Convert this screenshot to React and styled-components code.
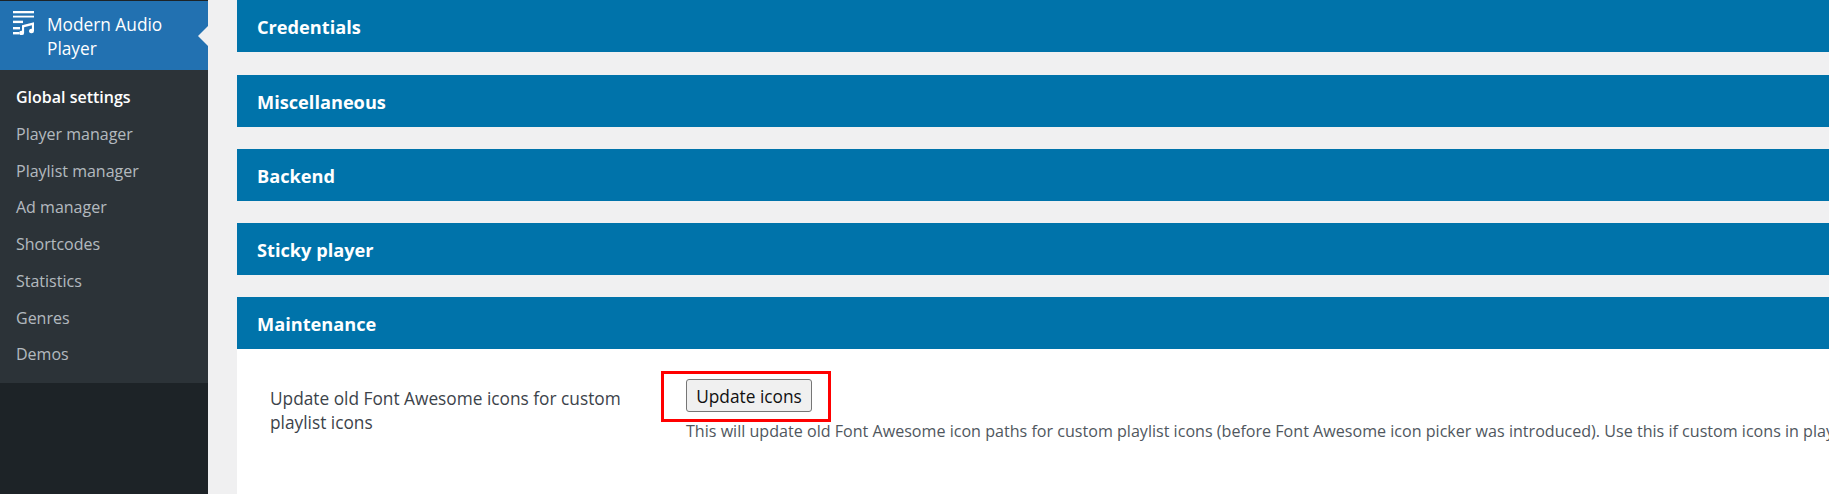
import React from 'react';
import styled, { createGlobalStyle } from 'styled-components';

const GlobalStyle = createGlobalStyle`
  html, body {
    margin: 0;
    height: 100%;
    overflow: hidden;
    background: #f0f0f1;
  }
  #root {
    height: 100%;
  }
`;

const menuItems = [
  'Global settings',
  'Player manager',
  'Playlist manager',
  'Ad manager',
  'Shortcodes',
  'Statistics',
  'Genres',
  'Demos',
];

const sections = ['Credentials', 'Miscellaneous', 'Backend', 'Sticky player'];

const Layout = styled.div`
  display: flex;
  height: 494px;
  width: 1829px;
  overflow: hidden;
  font-family: 'Open Sans', 'Liberation Sans', sans-serif;
`;

const Sidebar = styled.aside`
  width: 208px;
  flex: none;
  background: #1d2327;
  padding-top: 1px;
`;

const MenuHead = styled.div`
  position: relative;
  display: flex;
  height: 69px;
  background: #2271b1;
  color: #fff;
  font-size: 17.3px;
  line-height: 24px;
  padding: 10px 0 0 13px;
  box-sizing: border-box;

  &::after {
    content: '';
    position: absolute;
    right: 0;
    top: 25px;
    border: 10px solid transparent;
    border-right-color: #f0f0f1;
    border-left-width: 0;
  }
`;

const MenuIcon = styled.svg`
  width: 22px;
  height: 26px;
  flex: none;
  margin-right: 12px;
`;

const MenuTitle = styled.div`
  width: 140px;
  margin-top: 2px;
`;

const SubMenu = styled.ul`
  list-style: none;
  margin: 0;
  padding: 9.4px 0 10.6px;
  background: #2c3338;
`;

const SubItem = styled.li`
  height: 36.7px;
  line-height: 36.7px;
  padding-left: 16px;
  font-size: 16px;
  color: ${(p) => (p.$active ? '#fff' : 'rgba(240, 246, 252, 0.7)')};
  font-weight: ${(p) => (p.$active ? 600 : 400)};
`;

const Content = styled.main`
  flex: 1;
  min-width: 0;
  padding-left: 29px;
  display: flex;
  flex-direction: column;
  gap: 22px;
`;

const SectionBar = styled.h2`
  margin: 0;
  height: 52px;
  flex: none;
  background: #0073aa;
  color: #fff;
  font-size: 18.2px;
  font-weight: 700;
  line-height: 54px;
  padding-left: 20px;

  &:first-child {
    margin-bottom: 1px;
  }
`;

const Panel = styled.section`
  flex: 1;
  min-height: 0;
  background: #fff;
`;

const SettingRow = styled.div`
  display: flex;
  padding: 29px 0 0 33px;
`;

const SettingLabel = styled.div`
  width: 416px;
  box-sizing: border-box;
  flex: none;
  padding: 8px 40px 0 0;
  font-size: 17.3px;
  line-height: 24px;
  color: #3c434a;
`;

const SettingField = styled.div`
  min-width: 0;
`;

const Highlight = styled.div`
  position: relative;
  width: 126px;

  &::after {
    content: '';
    position: absolute;
    left: -25px;
    right: -19px;
    top: -8px;
    bottom: -10px;
    border: 3px solid #f00;
    pointer-events: none;
  }
`;

const UpdateButton = styled.button`
  display: block;
  width: 126px;
  height: 33px;
  padding: 1px 0 0;
  background: #f0f0f0;
  border: 1px solid #767676;
  border-radius: 3px;
  color: #111;
  font-family: inherit;
  font-size: 17.3px;
`;

const Description = styled.p`
  margin: 8px 0 0;
  font-size: 16.1px;
  line-height: 22px;
  color: #50575e;
  white-space: nowrap;
`;

const AudioIcon = () => (
  <MenuIcon viewBox="0 0 22 26" fill="#fff">
    <rect x="0" y="0" width="21" height="2.3" />
    <rect x="0" y="4.7" width="21" height="1.8" />
    <rect x="0" y="9.7" width="10" height="2.4" />
    <rect x="0" y="16" width="7" height="2.4" />
    <rect x="0" y="21" width="6" height="2.4" />
    <path d="M9 14.3l12-3v8.7a2.5 2.2 0 1 1-2.1-2.2v-3.6l-7.8 2v5.7a2.5 2.2 0 1 1-2.1-2.2z" />
  </MenuIcon>
);

const App = () => (
  <>
    <GlobalStyle />
    <Layout>
      <Sidebar>
        <MenuHead>
          <AudioIcon />
          <MenuTitle>Modern Audio Player</MenuTitle>
        </MenuHead>
        <SubMenu>
          {menuItems.map((item, i) => (
            <SubItem key={item} $active={i === 0}>
              {item}
            </SubItem>
          ))}
        </SubMenu>
      </Sidebar>
      <Content>
        {sections.map((name) => (
          <SectionBar key={name}>{name}</SectionBar>
        ))}
        <Panel>
          <SectionBar>Maintenance</SectionBar>
          <SettingRow>
            <SettingLabel>Update old Font Awesome icons for custom playlist icons</SettingLabel>
            <SettingField>
              <Highlight>
                <UpdateButton>Update icons</UpdateButton>
              </Highlight>
              <Description>
                This will update old Font Awesome icon paths for custom playlist icons (before Font
                Awesome icon picker was introduced). Use this if custom icons in playlist
              </Description>
            </SettingField>
          </SettingRow>
        </Panel>
      </Content>
    </Layout>
  </>
);

export default App;
